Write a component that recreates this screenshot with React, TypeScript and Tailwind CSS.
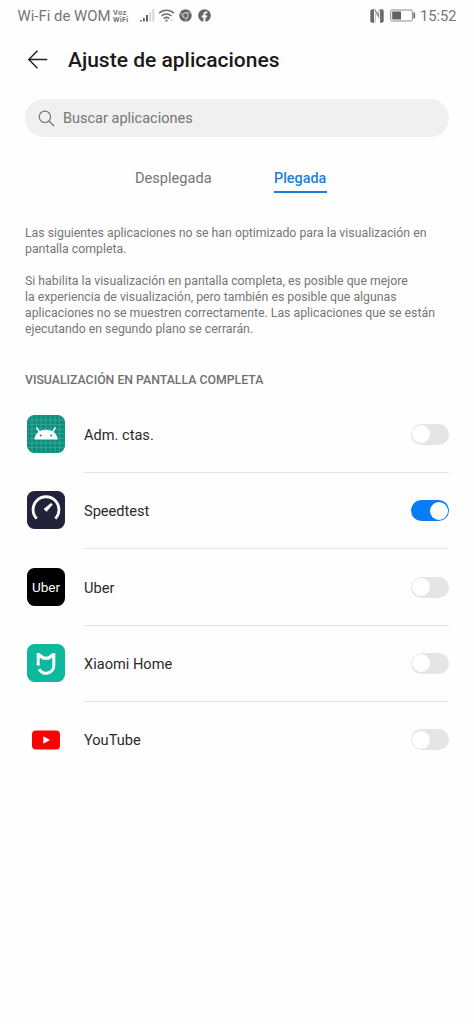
import type { ReactNode } from "react";

function StatusBar() {
  return (
    <header className="flex h-[31px] items-center justify-between pl-[17.5px] pr-[17px] text-[#757575]">
      <div className="flex items-center">
        <span className="w-[93px] whitespace-nowrap text-[14.9px] leading-[30px]">Wi-Fi de WOM</span>
        <span className="ml-[2.5px] flex w-[17px] flex-col text-[7.5px] font-bold leading-[7px]">
          <span className="tracking-[0.3px]">Voz</span>
          <span className="tracking-[0.2px]">WiFi</span>
        </span>
        <svg className="ml-[9px] h-[15px] w-[16px]" viewBox="0 0 16 15">
          <path d="M1 12h1.800v1.500H1zM4 10h1.800v3.500H4zM7 7h2v6.500H7z" fill="#606060" />
          <path d="M10.200 4h2v9.500h-2zM13.300 1h2v12.500h-2z" fill="#d6d6d6" />
        </svg>
        <svg className="ml-[3px] h-[15px] w-[17px]" viewBox="0 0 17 15" fill="none" stroke="#707070" strokeWidth="1.500">
          <path d="M1 5.2a10.8 10.8 0 0 1 15 0M3.5 8a7.2 7.2 0 0 1 10 0M5.8 10.6a4 4 0 0 1 5.4 0" />
          <circle cx="8.500" cy="12.700" r="1.100" fill="#707070" stroke="none" />
          <path d="M13 11v2.500M15 11v2.500" stroke="#d0d0d0" strokeWidth="1" />
        </svg>
        <svg className="ml-[4px] h-[13px] w-[13px]" viewBox="0 0 24 24">
          <circle cx="12" cy="12" r="11.500" fill="#666" />
          <circle cx="12" cy="12" r="5" fill="#666" stroke="#e8e8e8" strokeWidth="1.600" />
          <path d="M12 7h10.500M7.700 14.500 2.500 5.700M16.300 14.500 11 23.500" stroke="#e0e0e0" strokeWidth="1.200" />
        </svg>
        <svg className="ml-[6px] h-[13px] w-[13px]" viewBox="0 0 24 24">
          <circle cx="12" cy="12" r="11.700" fill="#666" />
          <path d="M10 24v-8.500H6.800V12H10V9.300C10 6 12 4.500 14.800 4.500c1.300 0 2.400.2 2.400.2v3h-1.500c-1.500 0-2 .9-2 1.900V12h3.400l-.6 3.500h-2.800V24z" fill="#fff" />
        </svg>
      </div>
      <div className="flex items-center">
        <svg className="h-[14px] w-[14px]" viewBox="0 0 14 14" fill="#696969">
          <path d="M4 .3H2.500C1 .3.300 1 .300 2.500v9c0 1.500.7 2.200 2.200 2.200H4z" />
          <path d="M10 13.700h1.500c1.500 0 2.200-.7 2.200-2.200v-9C13.700 1 13 .3 11.500.3H10z" />
          <path d="M4 .3h1.200l3.300 5V1.800L9.300.3H10v11.200L5.500 5v7.500l-.8 1.200H4z" fill="#8a8a8a" />
          <path d="M4.500 1.200v12M9.600.8v12M4.500 2.500l5.100 8.500" fill="none" stroke="#fff" strokeWidth=".9" />
        </svg>
        <svg className="ml-[6px] h-[13px] w-[26px]" viewBox="0 0 26 13">
          <rect x=".7" y="1" width="21.600" height="11" rx="1.500" fill="none" stroke="#8a8a8a" />
          <path d="M2.200 2.500H11v8H2.200z" fill="#606060" />
          <path d="M23.300 3.500h1.800v6h-1.800z" fill="#707070" />
        </svg>
        <span className="ml-[4px] w-[37px] whitespace-nowrap text-[14.7px] leading-[30px]">15:52</span>
      </div>
    </header>
  );
}

function AndroidIcon() {
  return (
    <svg className="h-[38px] w-[38px]" viewBox="0 0 38 38">
      <rect width="38" height="38" rx="7.500" fill="#0c8f7c" />
      <path
        d="M5 0v38M9.600 0v38M14.200 0v38M18.800 0v38M23.400 0v38M28 0v38M32.600 0v38M0 5h38M0 9.600h38M0 14.200h38M0 18.800h38M0 23.400h38M0 28h38M0 32.600h38"
        stroke="#5bb5a8"
        strokeWidth=".5"
      />
      <path d="M7.300 24.600c.6-6 5.200-9.800 11.700-9.800s11.100 3.800 11.700 9.800z" fill="#fff" />
      <path d="m12.500 17.200-2.600-4.400M25.500 17.200l2.600-4.400" stroke="#fff" strokeWidth="1.500" strokeLinecap="round" />
      <circle cx="13.800" cy="20.500" r="1" fill="#0c8f7c" />
      <circle cx="24.200" cy="20.500" r="1" fill="#0c8f7c" />
    </svg>
  );
}

function SpeedtestIcon() {
  return (
    <svg className="h-[38px] w-[38px]" viewBox="0 0 38 38">
      <rect width="38" height="38" rx="7.500" fill="#22223b" />
      <path d="M9.700 27.600a12.900 12.900 0 1 1 18.600 0" fill="none" stroke="#fff" strokeWidth="2.800" />
      <path d="m24 12 1.700 1.600-6.100 7.200-3-2.800z" fill="#fff" />
    </svg>
  );
}

function UberIcon() {
  return (
    <div className="flex h-[38px] w-[38px] items-center justify-center rounded-[7.5px] bg-black">
      <span className="text-[13.5px] leading-[38px] text-white">Uber</span>
    </div>
  );
}

function XiaomiIcon() {
  return (
    <svg className="h-[38px] w-[38px]" viewBox="0 0 38 38">
      <rect width="38" height="38" rx="7.500" fill="#0cb99d" />
      <path
        d="M9.700 9h2.600l4.800 3.600h3.800L25.700 9h2.600v12.500a9.300 9.300 0 0 1-17.600 4.200l2.800-1.200a6.300 6.300 0 0 0 11.800-3V13.500l-3.300 2.200h-6l-3.300-2.200v8h-3z"
        fill="#fff"
      />
    </svg>
  );
}

function YoutubeIcon() {
  return (
    <svg className="h-[38px] w-[38px]" viewBox="0 0 38 38">
      <rect x="5" y="9.400" width="28" height="19.200" rx="4" fill="#f90303" />
      <path d="m16.300 15.300 6.700 3.700-6.700 3.700z" fill="#fff" />
    </svg>
  );
}

function Toggle({ on }: { on?: boolean }) {
  return (
    <span
      role="switch"
      aria-checked={!!on}
      className={`flex h-[21px] w-[38.5px] items-center rounded-full p-[1.5px] ${on ? "justify-end bg-[#087cf5]" : "justify-start bg-[#e5e5e5]"}`}
    >
      <span className="h-[18px] w-[18px] rounded-full bg-white" />
    </span>
  );
}

type AppItem = { name: string; icon: ReactNode; on?: boolean };

const apps: AppItem[] = [
  { name: "Adm. ctas.", icon: <AndroidIcon /> },
  { name: "Speedtest", icon: <SpeedtestIcon />, on: true },
  { name: "Uber", icon: <UberIcon /> },
  { name: "Xiaomi Home", icon: <XiaomiIcon /> },
  { name: "YouTube", icon: <YoutubeIcon /> },
];

export default function App() {
  return (
    <div className="min-h-screen w-[474px] overflow-hidden bg-[#fefefe] font-['Roboto',sans-serif]">
      <StatusBar />
      <div className="flex h-[58px] items-center pl-[27px]">
        <svg className="h-[20px] w-[21px]" viewBox="0 0 21 20" fill="none" stroke="#222" strokeWidth="1.400">
          <path d="M20.300 9.500H2M10.500.8 1.800 9.500l8.700 8.700" />
        </svg>
        <h1 className="ml-[20px] whitespace-nowrap pt-px text-[21px] font-medium text-[#191919]">Ajuste de aplicaciones</h1>
      </div>
      <main className="px-[25px]">
        <div className="mt-[10px] flex h-[38px] items-center rounded-full bg-[#f0f0f0] pl-[13px]">
          <svg className="h-[17px] w-[17px]" viewBox="0 0 17 17" fill="none" stroke="#757575" strokeWidth="1.200">
            <circle cx="6.900" cy="6.800" r="5.700" />
            <path d="m11 11 5 5" />
          </svg>
          <span className="ml-[8px] pt-px text-[14.5px] text-[#757575]">Buscar aplicaciones</span>
        </div>
        <nav className="mt-[29px] flex h-[27px] pl-[110px] text-[14.6px] leading-[24px]">
          <span className="w-[139px] text-[#757575]">Desplegada</span>
          <span className="w-[53px] whitespace-nowrap border-b-2 border-[#1c7edb] pt-px text-[14.4px] font-medium text-[#1c7edb]">Plegada</span>
        </nav>
        <div className="mt-[32px] whitespace-nowrap text-[12.3px] leading-[16.1px] text-[#757575]">
          <p>
            Las siguientes aplicaciones no se han optimizado para la visualización en
            <br />
            pantalla completa.
          </p>
          <p className="mt-[16px]">
            Si habilita la visualización en pantalla completa, es posible que mejore
            <br />
            la experiencia de visualización, pero también es posible que algunas
            <br />
            aplicaciones no se muestren correctamente. Las aplicaciones que se están
            <br />
            ejecutando en segundo plano se cerrarán.
          </p>
        </div>
        <h2 className="mt-[34px] text-[12.3px] font-medium leading-[16px] text-[#707070]">VISUALIZACIÓN EN PANTALLA COMPLETA</h2>
        <ul className="mt-[9px]">
          {apps.map((app) => (
            <li key={app.name} className="group flex h-[76.4px] pl-[2px]">
              <div className="flex h-[75px] items-center">{app.icon}</div>
              <div className="ml-[19px] flex flex-1 items-center justify-between border-b border-[#e4e4e4] group-last:border-transparent">
                <span className="pt-[3px] text-[14.6px] text-[#2b2b2b]">{app.name}</span>
                <Toggle on={app.on} />
              </div>
            </li>
          ))}
        </ul>
      </main>
    </div>
  );
}
